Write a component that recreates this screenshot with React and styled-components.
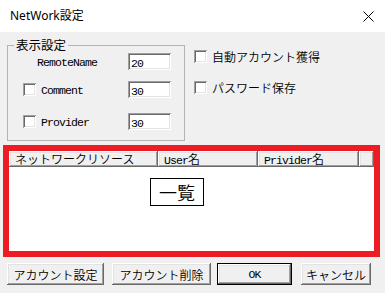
import React from 'react';
import styled, { createGlobalStyle } from 'styled-components';

const GlobalStyle = createGlobalStyle`
  html, body {
    margin: 0;
    padding: 0;
    background: #f0f0f0;
    overflow: hidden;
  }
  body {
    font-family: "Noto Sans CJK JP", "Noto Sans", sans-serif;
    font-size: 12px;
    font-weight: 350;
    color: #000;
  }
`;

const raised = `
  box-shadow: inset -1px -1px #696969, inset 1px 1px #ffffff,
    inset -2px -2px #a0a0a0, inset 2px 2px #e3e3e3;
`;

const sunken = `
  box-shadow: inset 1px 1px #a0a0a0, inset -1px -1px #ffffff,
    inset 2px 2px #696969, inset -2px -2px #e3e3e3;
`;

/* ---------- window frame ---------- */
const Window = styled.div`
  width: 385px;
  height: 293px;
  background: #f0f0f0;
  display: flex;
  flex-direction: column;
`;

const TitleBar = styled.div`
  height: 32px;
  flex: 0 0 32px;
  background: #ffffff;
  display: flex;
  align-items: center;
  justify-content: space-between;
  padding: 0 11px 0 10px;
  box-sizing: border-box;
  font-family: "Noto Sans", "Noto Sans CJK JP", sans-serif;
  font-weight: 400;
  font-size: 12px;
  line-height: 1;
`;

const CloseIcon = () => (
  <svg width="11" height="11" viewBox="0 0 11 11">
    <path d="M0.5 0.5 L10.5 10.5 M10.5 0.5 L0.5 10.5" stroke="#000" strokeWidth="1" fill="none" />
  </svg>
);

/* half-width latin text, like the dialog's bitmap font */
const Latin = styled.span`
  font-family: "Liberation Mono", "DejaVu Sans Mono", monospace;
  font-weight: 400;
  font-size: 11.5px;
  letter-spacing: -0.9px;
`;

/* ---------- top area ---------- */
const TopRow = styled.div`
  display: flex;
  align-items: flex-start;
  padding: 5px 0 0 7px;
`;

const GroupBox = styled.fieldset`
  margin: 0;
  padding: 0 13px 0 0;
  width: 178px;
  height: 104px;
  box-sizing: border-box;
  border: 1px solid #b4b4b4;
  min-width: 0;
`;

const Legend = styled.legend`
  margin-left: 6px;
  padding: 0 2px;
  line-height: 16px;
  font-size: 12.5px;
  font-weight: 400;
`;

const FieldRow = styled.div`
  display: flex;
  align-items: center;
  height: 17px;
  margin-top: ${(p) => p.$mt}px;
  padding-left: ${(p) => p.$pl}px;
`;

const FieldLabel = styled.span`
  flex: 1;
  line-height: 17px;
`;

const TextBox = styled.div`
  width: 43px;
  height: 17px;
  box-sizing: border-box;
  background: #ffffff;
  padding: 1px 0 0 3px;
  line-height: 15px;
  ${sunken}
`;

const CheckBox = styled.span`
  display: inline-block;
  width: 13px;
  height: 13px;
  flex: 0 0 13px;
  background: #ffffff;
  margin-right: ${(p) => p.$mr ?? 5}px;
  ${sunken}
`;

const Options = styled.div`
  display: flex;
  flex-direction: column;
  gap: 18px;
  margin: 13px 0 0 9px;
`;

const OptionRow = styled.div`
  display: flex;
  align-items: center;
  height: 13px;
  line-height: 13px;
  white-space: nowrap;
`;

/* ---------- list view ---------- */
const ListFrame = styled.div`
  margin: 4px 0 0 3px;
  width: 377px;
  height: 112px;
  box-sizing: border-box;
  border: 6px solid #ed1c24;
  background: #ffffff;
  display: flex;
  flex-direction: column;
`;

const Header = styled.div`
  display: flex;
  height: 16px;
  flex: 0 0 16px;
`;

const HeaderCell = styled.div`
  width: ${(p) => (p.$w ? `${p.$w}px` : 'auto')};
  flex: ${(p) => (p.$w ? `0 0 ${p.$w}px` : '1')};
  box-sizing: border-box;
  background: #f0f0f0;
  padding-left: 6px;
  line-height: 16px;
  white-space: nowrap;
  overflow: hidden;
  ${raised}
`;

const ListBody = styled.div`
  flex: 1;
  background: #ffffff;
  padding: 11px 0 0 141px;
`;

const Caption = styled.div`
  width: 54px;
  height: 28px;
  box-sizing: border-box;
  border: 1px solid #000;
  display: flex;
  align-items: center;
  justify-content: center;
  font-size: 18px;
`;

/* ---------- buttons ---------- */
const ButtonRow = styled.div`
  display: flex;
  padding: 6px 0 0 7px;
`;

const Button = styled.div`
  width: ${(p) => p.$w}px;
  height: 22px;
  margin-left: ${(p) => p.$ml || 0}px;
  box-sizing: border-box;
  background: #f0f0f0;
  display: flex;
  align-items: center;
  justify-content: center;
  white-space: nowrap;
  ${raised}
  ${(p) => p.$default && `border: 1px solid #000;`}
`;

export default function App() {
  return (
    <>
      <GlobalStyle />
      <Window>
        <TitleBar>
          <span>NetWork設定</span>
          <CloseIcon />
        </TitleBar>

        <TopRow>
          <GroupBox>
            <Legend>表示設定</Legend>
            <FieldRow $mt={0} $pl={29}>
              <FieldLabel><Latin>RemoteName</Latin></FieldLabel>
              <TextBox><Latin>20</Latin></TextBox>
            </FieldRow>
            <FieldRow $mt={11} $pl={15}>
              <CheckBox />
              <FieldLabel><Latin>Comment</Latin></FieldLabel>
              <TextBox><Latin>30</Latin></TextBox>
            </FieldRow>
            <FieldRow $mt={15} $pl={15}>
              <CheckBox />
              <FieldLabel><Latin>Provider</Latin></FieldLabel>
              <TextBox><Latin>30</Latin></TextBox>
            </FieldRow>
          </GroupBox>

          <Options>
            <OptionRow>
              <CheckBox $mr={5} />
              自動アカウント獲得
            </OptionRow>
            <OptionRow>
              <CheckBox $mr={5} />
              パスワード保存
            </OptionRow>
          </Options>
        </TopRow>

        <ListFrame>
          <Header>
            <HeaderCell $w={149}>ネットワークリソース</HeaderCell>
            <HeaderCell $w={100}><Latin>User</Latin>名</HeaderCell>
            <HeaderCell $w={101}><Latin>Privider</Latin>名</HeaderCell>
            <HeaderCell />
          </Header>
          <ListBody>
            <Caption>一覧</Caption>
          </ListBody>
        </ListFrame>

        <ButtonRow>
          <Button $w={97}>アカウント設定</Button>
          <Button $w={99} $ml={8}>アカウント削除</Button>
          <Button $w={75} $ml={6} $default><Latin>OK</Latin></Button>
          <Button $w={70} $ml={9}>キャンセル</Button>
        </ButtonRow>
      </Window>
    </>
  );
}
